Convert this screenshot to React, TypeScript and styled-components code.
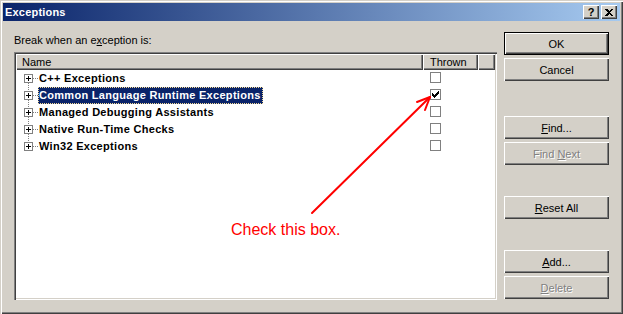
import React from 'react';
import styled, { createGlobalStyle } from 'styled-components';

const GlobalStyle = createGlobalStyle`
  html, body {
    margin: 0;
    padding: 0;
    background: #d4d0c8;
  }
  body {
    font-family: 'Liberation Sans', Arial, sans-serif;
    font-size: 11px;
    color: #000;
  }
`;

const Window = styled.div`
  position: relative;
  width: 623px;
  height: 314px;
  box-sizing: border-box;
  padding: 3px;
  background: #d4d0c8;
  box-shadow: inset 1px 1px #d4d0c8, inset 2px 2px #fff, inset -1px -1px #404040, inset -2px -2px #808080;
  display: flex;
  flex-direction: column;
  overflow: hidden;
`;

const TitleBar = styled.div`
  height: 18px;
  flex: none;
  display: flex;
  align-items: center;
  padding: 0 3px 0 2px;
  background: linear-gradient(to right, #0a246a, #a6caf0);
  color: #fff;
  font-weight: bold;
  font-size: 11px;
`;

const TitleText = styled.span`
  flex: 1;
  letter-spacing: 0.2px;
`;

const CaptionButton = styled.div<{ gap?: number }>`
  width: 16px;
  height: 14px;
  box-sizing: border-box;
  margin-left: ${p => p.gap ?? 0}px;
  background: #d4d0c8;
  box-shadow: inset 1px 1px #fff, inset -1px -1px #404040, inset -2px -2px #808080;
  color: #000;
  font-weight: bold;
  font-size: 11px;
  line-height: 14px;
  text-align: center;
  display: flex;
  align-items: center;
  justify-content: center;
`;

const Body = styled.div`
  flex: 1;
  display: flex;
  gap: 7px;
  padding: 11px;
  min-height: 0;
`;

const LeftPane = styled.div`
  flex: 1;
  display: flex;
  flex-direction: column;
`;

const Caption = styled.div`
  margin: 2px 0 5px;
  line-height: 13px;
`;

const ListBox = styled.div`
  flex: 1;
  background: #fff;
  padding: 2px;
  box-shadow: inset 1px 1px #808080, inset 2px 2px #404040, inset -1px -1px #fff, inset -2px -2px #d4d0c8;
  display: flex;
  flex-direction: column;
`;

const Header = styled.div`
  display: flex;
  height: 16px;
  flex: none;
`;

const HeaderCell = styled.div<{ w?: number; pad: number }>`
  ${p => (p.w ? `width: ${p.w}px;` : 'flex: 1;')}
  box-sizing: border-box;
  padding-left: ${p => p.pad}px;
  background: #d4d0c8;
  box-shadow: inset 1px 1px #fff, inset -1px -1px #404040, inset -2px -2px #808080;
  line-height: 16px;
  white-space: nowrap;
`;

const Row = styled.div`
  display: flex;
  height: 17px;
`;

const NameCell = styled.div`
  width: 407px;
  display: flex;
  align-items: center;
`;

const Label = styled.span<{ selected?: boolean }>`
  font-weight: bold;
  letter-spacing: 0.3px;
  line-height: 15px;
  padding: 0 1px 0 0;
  border: 1px dotted ${p => (p.selected ? '#f5db95' : 'transparent')};
  background: ${p => (p.selected ? '#0a246a' : 'transparent')};
  color: ${p => (p.selected ? '#fff' : '#000')};
  white-space: nowrap;
`;

const ThrownCell = styled.div`
  width: 55px;
  box-sizing: border-box;
  padding: 2px 0 0 7px;
`;

const CheckBox = styled.div`
  width: 11px;
  height: 11px;
  box-sizing: border-box;
  border: 1px solid #808080;
  background: #fff;
  display: flex;
  align-items: center;
  justify-content: center;
`;

const ButtonColumn = styled.div`
  width: 105px;
  display: flex;
  flex-direction: column;
`;

const Button = styled.div<{ top: number; isDefault?: boolean; disabled?: boolean }>`
  height: 23px;
  box-sizing: border-box;
  margin-top: ${p => p.top}px;
  background: #d4d0c8;
  border: ${p => (p.isDefault ? '1px solid #000' : 'none')};
  box-shadow: inset 1px 1px #fff, inset -1px -1px #404040, inset -2px -2px #808080;
  display: flex;
  align-items: center;
  justify-content: center;
  color: ${p => (p.disabled ? '#808080' : '#000')};
  text-shadow: ${p => (p.disabled ? '1px 1px 0 #fff' : 'none')};
  u {
    text-decoration-thickness: 1px;
    text-underline-offset: 1px;
  }
`;

const Overlay = styled.svg`
  position: absolute;
  left: 0;
  top: 0;
  pointer-events: none;
`;

const Note = styled.div`
  position: absolute;
  left: 231px;
  top: 222px;
  font-size: 16px;
  line-height: 16px;
  color: #ff0000;
`;

const CHECK = ['......#', '.....##', '#...###', '##.###.', '#####..', '.###...', '..#....'];
const checkPath = CHECK.flatMap((r, y) =>
  r.split('').map((c, x) => (c === '#' ? `M${x} ${y}h1v1h-1z` : ''))
).join('');

function Gutter({ first, last }: { first?: boolean; last?: boolean }) {
  return (
    <svg width="22" height="17" shapeRendering="crispEdges" style={{ flex: 'none' }}>
      {!first && <line x1="12.5" y1="0" x2="12.5" y2="4" stroke="#808080" strokeDasharray="1 1" />}
      {!last && <line x1="12.5" y1="13" x2="12.5" y2="17" stroke="#808080" strokeDasharray="1 1" />}
      <line x1="17" y1="8.5" x2="22" y2="8.5" stroke="#808080" strokeDasharray="1 1" />
      <rect x="8.5" y="4.5" width="8" height="8" fill="#fff" stroke="#808080" />
      <line x1="10" y1="8.5" x2="15" y2="8.5" stroke="#000" />
      <line x1="12.5" y1="6" x2="12.5" y2="11" stroke="#000" />
    </svg>
  );
}

const rows = [
  { name: 'C++ Exceptions' },
  { name: 'Common Language Runtime Exceptions', selected: true, checked: true },
  { name: 'Managed Debugging Assistants' },
  { name: 'Native Run-Time Checks' },
  { name: 'Win32 Exceptions' },
];

export default function App() {
  return (
    <>
      <GlobalStyle />
      <Window>
        <TitleBar>
          <TitleText>Exceptions</TitleText>
          <CaptionButton>?</CaptionButton>
          <CaptionButton gap={2}>
            <svg width="8" height="7" shapeRendering="crispEdges">
              <path d="M0 0h2l2 2 2-2h2l-3 3.5 3 3.5h-2l-2-2-2 2h-2l3-3.5z" fill="#000" />
            </svg>
          </CaptionButton>
        </TitleBar>
        <Body>
          <LeftPane>
            <Caption>
              Break when an e<u>x</u>ception is:
            </Caption>
            <ListBox>
              <Header>
                <HeaderCell w={407} pad={6}>Name</HeaderCell>
                <HeaderCell w={55} pad={7}>Thrown</HeaderCell>
                <HeaderCell pad={0} />
              </Header>
              {rows.map((r, i) => (
                <Row key={r.name}>
                  <NameCell>
                    <Gutter first={i === 0} last={i === rows.length - 1} />
                    <Label selected={r.selected}>{r.name}</Label>
                  </NameCell>
                  <ThrownCell>
                    <CheckBox>
                      {r.checked && (
                        <svg width="7" height="7" shapeRendering="crispEdges">
                          <path d={checkPath} fill="#000" />
                        </svg>
                      )}
                    </CheckBox>
                  </ThrownCell>
                </Row>
              ))}
            </ListBox>
          </LeftPane>
          <ButtonColumn>
            <Button top={0} isDefault>OK</Button>
            <Button top={3}>Cancel</Button>
            <Button top={35}><span><u>F</u>ind...</span></Button>
            <Button top={3} disabled><span>Find <u>N</u>ext</span></Button>
            <Button top={31}><span><u>R</u>eset All</span></Button>
            <Button top={31}><span><u>A</u>dd...</span></Button>
            <Button top={3} disabled><span><u>D</u>elete</span></Button>
          </ButtonColumn>
        </Body>
        <Overlay width="623" height="314">
          <g stroke="#ff0000" strokeWidth="2" strokeLinecap="round" fill="none">
            <line x1="312" y1="213" x2="430" y2="97" />
            <polyline points="417,102 430,97 425,110" strokeLinejoin="round" />
          </g>
        </Overlay>
        <Note>Check this box.</Note>
      </Window>
    </>
  );
}
